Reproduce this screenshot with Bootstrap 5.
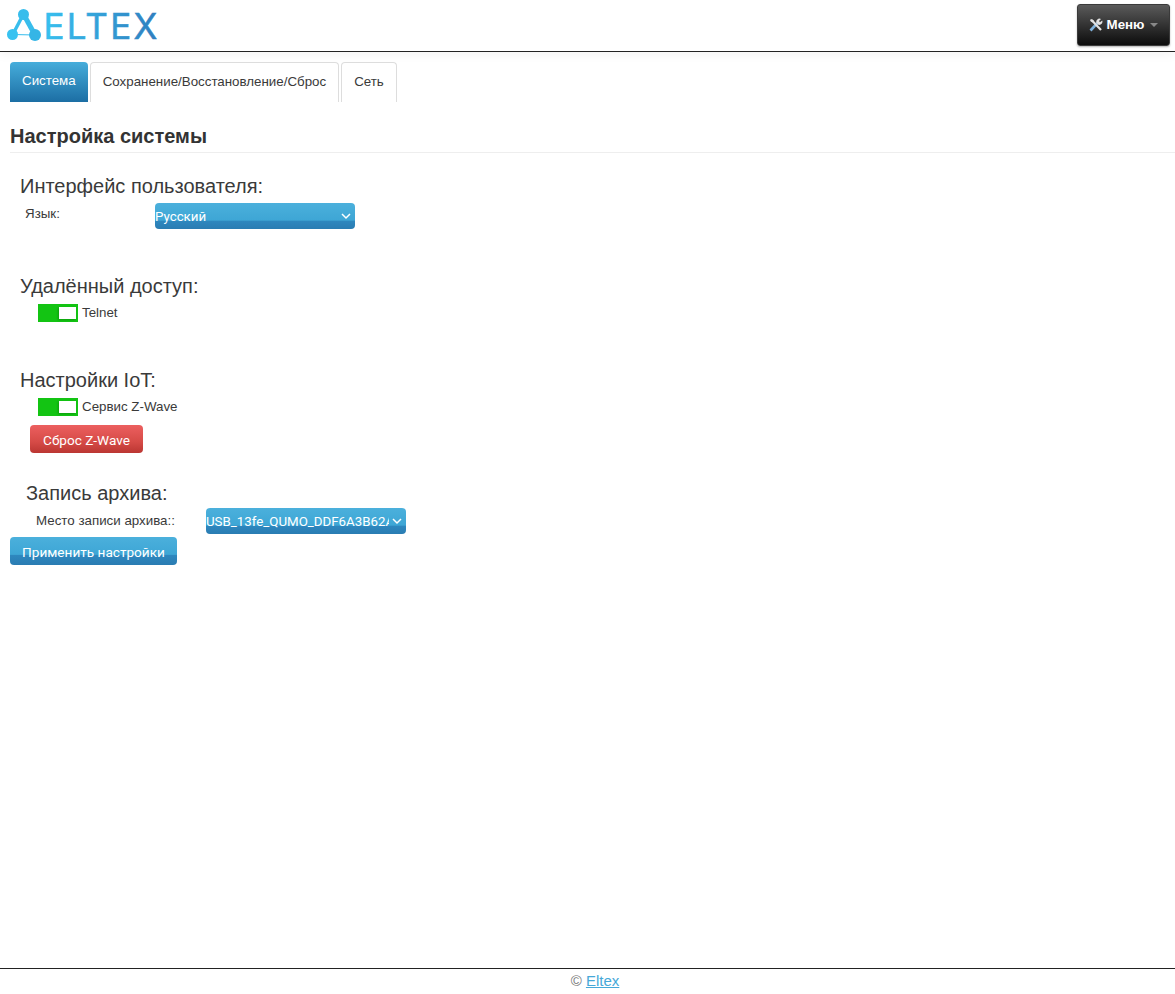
<!DOCTYPE html>
<html lang="ru"><head><meta charset="utf-8"><title>Eltex</title>
<link rel="stylesheet" href="https://cdn.jsdelivr.net/npm/bootstrap@5.3.0/dist/css/bootstrap.min.css">
<style>
html,body{height:100%}
body{font-family:"Liberation Sans",Arial,sans-serif;font-size:13.33px;color:#3a3a3a;background:#fff;min-height:994px}
.topbar{height:52px;border-bottom:1px solid #222;box-shadow:0 3px 10px rgba(0,0,0,.05);padding:4px 5px 0 7px}
.logo-svg{display:block;width:152px;height:36px;margin-top:4px;overflow:visible}
.menu-btn{width:93px;height:42px;background:linear-gradient(#5a5a5a,#0c0c0c);border:1px solid #3a3a3a;border-radius:3px;color:#fff;font-weight:700;font-size:13.3px;box-shadow:0 1px 2px rgba(0,0,0,.3)}
.menu-btn .tri{display:inline-block;width:0;height:0;margin-left:2px;border-left:4px solid transparent;border-right:4px solid transparent;border-top:4px solid #888}
.tabbar{margin:10px 0 0 10px;gap:2px;height:40px}
.tab-item{height:40px;padding:0 12px;font-size:13.33px;color:#3a3a3a;border:1px solid #ddd;border-bottom:0;border-radius:4px 4px 0 0;background:#fff;text-decoration:none;line-height:37px}
.tab-item.on{background:linear-gradient(#46addb,#1c6ea4);color:#fff;border:0;line-height:37px}
.page-title{font-size:20px;font-weight:700;line-height:24px;margin:22px 0 0 10px;padding-bottom:4px;border-bottom:1px solid #eee;color:#333}
.sect-title{font-size:20px;font-weight:400;line-height:24px;margin:0;color:#3a3a3a}
.set-a{margin:21px 0 0 20px}
.set-b{margin:45px 0 0 20px}
.set-c{margin:46px 0 0 20px}
.set-d{margin:28px 0 0 26px}
.lang-row{margin:5px 0 0 5px;height:26px}
.lang-label{width:130px;line-height:21px}
.ui-select{-webkit-appearance:none;appearance:none;width:200px;height:26px;background:url("data:image/svg+xml,%3Csvg xmlns='http://www.w3.org/2000/svg' width='10' height='7'%3E%3Cpath d='M1 1l4 4 4-4' fill='none' stroke='%23fff' stroke-width='1.5'/%3E%3C/svg%3E") no-repeat right 4px center,linear-gradient(#4bb0dc,#3ea6d5 66%,#2e87be 70%,#2a7cb2);color:#fff;border:0;border-radius:4px;padding:1px 17px 0 0;font-family:Roboto,sans-serif;font-size:13.3px;outline:0}
.ui-select option{color:#000;background:#fff}
.tog-row{margin:6px 0 0 18px;height:18px;gap:4px;line-height:18px;font-size:13.33px}
.toggle-box{width:40px;height:18px;background:#13c413;position:relative;display:block}
.toggle-box i{position:absolute;right:2px;top:3px;width:17px;height:12px;background:#fff;box-shadow:-1px 1px 2px rgba(0,80,0,.35)}
.grad-btn{color:#fff;border:0;border-radius:4px;font-family:Roboto,sans-serif;font-size:13.6px;height:28px;padding:1px 0 0;line-height:26px;white-space:nowrap;display:block;text-align:center}
.btn-red{width:113px;margin:9px 0 0 30px;background:linear-gradient(#ec5f5f,#d64b47 60%,#bb3632)}
.btn-blue{width:167px;margin:3px 0 0 10px;background:linear-gradient(#4bb0dc,#3ea6d5 62%,#2e87be 66%,#2a7cb2)}
.arch-row{margin:3px 0 0 10px;height:26px}
.arch-label{width:196px;padding-left:26px;line-height:26px;font-size:13.33px;white-space:nowrap}
.foot{position:absolute;left:0;right:0;top:968px;border-top:1px solid #222;height:26px;padding-left:15px;text-align:center;font-size:15px;line-height:24px;color:#777}
.foot a{color:#46a8d8}
</style></head>
<body>
<header class="topbar d-flex justify-content-between align-items-start">
<svg class="logo-svg" viewBox="0 0 152 36" role="img" aria-label="Eltex">
<defs><linearGradient id="lg" gradientUnits="userSpaceOnUse" x1="37" x2="150" y1="0" y2="0"><stop offset="0" stop-color="#38c0ef"/><stop offset="1" stop-color="#2f7fbf"/></linearGradient></defs>
<path d="M16 7 L6 26" stroke="#38bdec" stroke-width="3.4"/>
<path d="M17 7 L28 27" stroke="#38bdec" stroke-width="5"/>
<path d="M6 26.5 L28 27" stroke="#38bdec" stroke-width="1.2"/>
<circle cx="16.5" cy="6.5" r="5.5" fill="#38bdec"/>
<circle cx="5.5" cy="26.5" r="5.5" fill="#38c2f0"/>
<circle cx="28" cy="27" r="6" fill="#35b5e6"/>
<text x="36.5" y="30.5" font-family="Inter,sans-serif" font-size="35" font-weight="400" fill="url(#lg)" stroke="url(#lg)" stroke-width=".5" letter-spacing="2.2">ELTEX</text>
</svg>
<button class="menu-btn d-flex align-items-center justify-content-center gap-1 p-0" type="button">
<svg width="14" height="14" viewBox="0 0 14 14"><path d="M1.5 12.5 L8.5 5" stroke="#7fb2dd" stroke-width="2.6"/><path d="M3 2.5 L12 12" stroke="#e2e2e2" stroke-width="2.2"/><path d="M7.5 5 A3.2 3.2 0 0 1 12 1 L10 3 L11 4.2 L13.2 2.5 A3.2 3.2 0 0 1 9.5 6.8 Z" fill="#e2e2e2"/><path d="M1 1.8 L3 1 L5 3 L3.5 4.5 L1.5 3.2 Z" fill="#e2e2e2"/></svg>
<span>Меню</span><span class="tri"></span></button>
</header>
<nav class="tabbar d-flex">
<a class="tab-item on" href="#">Система</a>
<a class="tab-item" href="#">Сохранение/Восстановление/Сброс</a>
<a class="tab-item" href="#">Сеть</a>
</nav>
<h2 class="page-title">Настройка системы</h2>
<section class="set-a">
<h3 class="sect-title">Интерфейс пользователя:</h3>
<div class="lang-row d-flex"><label class="lang-label">Язык:</label><select class="ui-select"><option>Русский</option></select></div>
</section>
<section class="set-b">
<h3 class="sect-title">Удалённый доступ:</h3>
<div class="tog-row d-flex"><span class="toggle-box"><i></i></span><span>Telnet</span></div>
</section>
<section class="set-c">
<h3 class="sect-title">Настройки IoT:</h3>
<div class="tog-row d-flex"><span class="toggle-box"><i></i></span><span>Сервис Z-Wave</span></div>
</section>
<button class="grad-btn btn-red" type="button">Сброс Z-Wave</button>
<section class="set-d"><h3 class="sect-title">Запись архива:</h3></section>
<div class="arch-row d-flex"><label class="arch-label">Место записи архива::</label><select class="ui-select"><option>USB_13fe_QUMO_DDF6A3B62A1</option></select></div>
<button class="grad-btn btn-blue" type="button">Применить настройки</button>
<footer class="foot">© <a href="#">Eltex</a></footer>
</body></html>
